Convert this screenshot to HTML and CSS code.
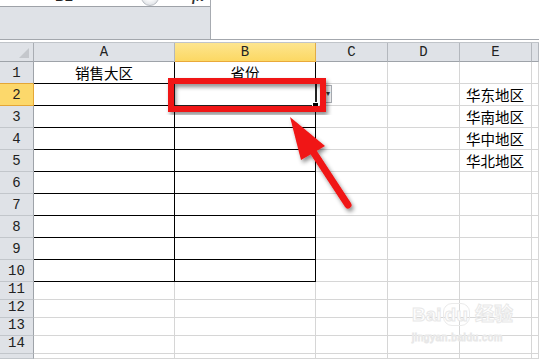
FILE: index.html
```html
<!DOCTYPE html>
<html lang="zh">
<head>
<meta charset="utf-8">
<link rel="stylesheet" href="styles.css">
</head>
<body>
<div class="page">
  <div class="top">
    <div class="panel">
      <div class="strip">
        <div class="namebox">B2</div>
        <div class="nbarrow">▾</div>
        <div class="knob"></div>
        <div class="fx">fx</div>
      </div>
      <div class="panelfill"></div>
    </div>
    <div class="formula"></div>
  </div>
  <div class="sep"></div>
  <div class="sheet">
    <div class="corner"><div class="tri"></div></div>
    <div class="ch">A</div>
    <div class="ch sel">B</div>
    <div class="ch">C</div>
    <div class="ch">D</div>
    <div class="ch">E</div>
    <div class="ch last"></div>

    <div class="rh above">1</div>
    <div class="c t mid">销售大区</div>
    <div class="c t mid">省份</div>
    <div class="c"></div><div class="c"></div><div class="c"></div><div class="c"></div>

    <div class="rh sel">2</div>
    <div class="c t"></div><div class="c t"></div>
    <div class="c"></div><div class="c"></div><div class="c txt">华东地区</div><div class="c"></div>

    <div class="rh">3</div>
    <div class="c t"></div><div class="c t"></div>
    <div class="c"></div><div class="c"></div><div class="c txt">华南地区</div><div class="c"></div>

    <div class="rh">4</div>
    <div class="c t"></div><div class="c t"></div>
    <div class="c"></div><div class="c"></div><div class="c txt">华中地区</div><div class="c"></div>

    <div class="rh">5</div>
    <div class="c t"></div><div class="c t"></div>
    <div class="c"></div><div class="c"></div><div class="c txt">华北地区</div><div class="c"></div>

    <div class="rh">6</div>
    <div class="c t"></div><div class="c t"></div>
    <div class="c"></div><div class="c"></div><div class="c"></div><div class="c"></div>

    <div class="rh">7</div>
    <div class="c t"></div><div class="c t"></div>
    <div class="c"></div><div class="c"></div><div class="c"></div><div class="c"></div>

    <div class="rh">8</div>
    <div class="c t"></div><div class="c t"></div>
    <div class="c"></div><div class="c"></div><div class="c"></div><div class="c"></div>

    <div class="rh">9</div>
    <div class="c t"></div><div class="c t"></div>
    <div class="c"></div><div class="c"></div><div class="c"></div><div class="c"></div>

    <div class="rh">10</div>
    <div class="c t"></div><div class="c t"></div>
    <div class="c"></div><div class="c"></div><div class="c"></div><div class="c"></div>

    <div class="rh">11</div>
    <div class="c"></div><div class="c"></div><div class="c"></div><div class="c"></div><div class="c"></div><div class="c"></div>
    <div class="rh">12</div>
    <div class="c"></div><div class="c"></div><div class="c"></div><div class="c"></div><div class="c"></div><div class="c"></div>
    <div class="rh">13</div>
    <div class="c"></div><div class="c"></div><div class="c"></div><div class="c"></div><div class="c"></div><div class="c"></div>
    <div class="rh">14</div>
    <div class="c"></div><div class="c"></div><div class="c"></div><div class="c"></div><div class="c"></div><div class="c"></div>
    <div class="rh"></div>
    <div class="c"></div><div class="c"></div><div class="c"></div><div class="c"></div><div class="c"></div><div class="c"></div>
  </div>

  <div class="selbox"><div class="handle"></div></div>
  <div class="ddbtn">▾</div>

  <div class="watermark">
    <div class="wm1">Bai<span class="du">du</span> 经验</div>
    <div class="wm2">jingyan.baidu.com</div>
  </div>

  <svg class="overlay" width="539" height="359" viewBox="0 0 539 359">
    <defs>
      <filter id="sh" x="-20%" y="-20%" width="140%" height="140%">
        <feDropShadow dx="2" dy="3" stdDeviation="2" flood-color="#000" flood-opacity="0.45"/>
      </filter>
    </defs>
    <rect x="171" y="81" width="152" height="28" fill="none" stroke="#f01414" stroke-width="6" filter="url(#sh)"/>
    <g filter="url(#sh)" fill="#f01414">
      <polygon points="290,117 325,146 301,160"/>
      <line x1="312" y1="150" x2="348" y2="205" stroke="#f01414" stroke-width="7" stroke-linecap="round"/>
    </g>
  </svg>
</div>
</body>
</html>
```

FILE: styles.css
```css
html, body {
  margin: 0;
  padding: 0;
  background: #fff;
}
.page {
  position: relative;
  width: 539px;
  height: 359px;
  overflow: hidden;
  font-family: "Liberation Mono", monospace;
  color: #222;
}
.top {
  display: flex;
  height: 39px;
}
.panel {
  width: 210px;
  display: flex;
  flex-direction: column;
  border-right: 1px solid #a7abb1;
  background: #dfe2e7;
}
.strip {
  height: 6px;
  display: flex;
  align-items: flex-end;
  overflow: hidden;
  background: #fff;
  border-bottom: 1px solid #9ea2a8;
}
.namebox {
  width: 128px;
  flex: none;
  text-align: center;
  font: 15px/20px "Liberation Sans", sans-serif;
  color: #222;
}
.nbarrow {
  width: 10px;
  flex: none;
  font: 11px/12px "DejaVu Sans", sans-serif;
  color: #333;
  margin-bottom: 3px;
}
.knob {
  width: 18px;
  height: 18px;
  flex: none;
  margin-left: 3px;
  border-radius: 50%;
  border: 1px solid #b9bdc3;
  background: radial-gradient(circle at 50% 40%, #fff 30%, #dfe2e6 80%);
  box-sizing: border-box;
}
.fx {
  margin-left: 33px;
  font: italic bold 14px/18px "Liberation Serif", serif;
  color: #333;
}
.panelfill {
  flex: 1;
}
.formula {
  flex: 1;
  background: #fff;
}
.sep {
  height: 2px;
  border-top: 1px solid #a3a7ad;
  border-bottom: 1px solid #c0c4c9;
  background: #fff;
}
.sheet {
  display: grid;
  grid-template-columns: 34px 141px 141px 72px 72px 72px 1fr;
  grid-template-rows: 19px repeat(10, 22px) repeat(4, 18px) 1fr;
  height: 316px;
}
.sheet > div {
  box-sizing: border-box;
}
.corner {
  background: #dfe2e7;
  border-right: 1px solid #a9adb3;
  border-bottom: 1px solid #9ea3a9;
  display: flex;
  justify-content: flex-end;
  align-items: flex-end;
  padding: 0 4px 3px 0;
}
.tri {
  width: 10px;
  height: 10px;
  background: #c4c7cc;
  clip-path: polygon(100% 0, 100% 100%, 0 100%);
}
.ch {
  background: #dfe2e7;
  border-right: 1px solid #b3b7bd;
  border-bottom: 1px solid #9ea3a9;
  display: flex;
  align-items: center;
  justify-content: center;
  font-size: 14px;
  line-height: 18px;
}
.ch.sel {
  background: linear-gradient(#fde58f, #fcd863);
  border-right-color: #e2ac45;
  border-bottom-color: #e9a93a;
}
.rh {
  background: #dfe2e7;
  border-right: 1px solid #9ea3a9;
  border-bottom: 1px solid #c2c6cb;
  display: flex;
  align-items: flex-end;
  justify-content: center;
  font-size: 14px;
  line-height: 16px;
  padding-bottom: 2px;
}
.rh.above {
  border-bottom-color: #e4a636;
}
.rh.sel {
  background: #fcd86b;
  border-right-color: #e4a636;
  border-bottom-color: #e4a636;
}
.c {
  border-right: 1px solid #d6d6d6;
  border-bottom: 1px solid #d6d6d6;
  font-family: "Noto Sans CJK SC", sans-serif;
  font-size: 14.5px;
  color: #000;
}
.c.t {
  border-right-color: #000;
  border-bottom-color: #000;
}
.c.mid {
  display: flex;
  align-items: center;
  justify-content: center;
  line-height: 18px;
}
.c.txt {
  display: flex;
  align-items: flex-end;
  padding: 0 0 1px 6px;
  line-height: 18px;
  white-space: nowrap;
}
.selbox {
  position: absolute;
  left: 173px;
  top: 82px;
  width: 144px;
  height: 25px;
  box-sizing: border-box;
  border: 2px solid #222;
  display: flex;
  justify-content: flex-end;
  align-items: flex-end;
}
.handle {
  width: 5px;
  height: 5px;
  background: #000;
  border: 1px solid #fff;
  margin: 0 -4px -4px 0;
}
.ddbtn {
  position: absolute;
  left: 320px;
  top: 85px;
  width: 12px;
  height: 18px;
  box-sizing: border-box;
  border: 1px solid #a9adb3;
  background: #f3f4f6;
  font: 8px/16px "DejaVu Sans", sans-serif;
  text-align: right;
  padding-right: 1px;
  color: #333;
}
.watermark {
  position: absolute;
  left: 412px;
  top: 302px;
  color: #fff;
  -webkit-text-stroke: 1px #e8e8e8;
  font-family: "Liberation Sans", "Noto Sans CJK SC", sans-serif;
}
.wm1 {
  font-size: 19px;
  font-weight: bold;
  line-height: 26px;
  white-space: nowrap;
}
.du {
  border: 1px solid #ebebeb;
  border-radius: 9px;
  padding: 0 1px;
  margin-left: 1px;
}
.wm2 {
  font-size: 10px;
  line-height: 13px;
  margin-top: 3px;
  letter-spacing: 0.6px;
}
.overlay {
  position: absolute;
  left: 0;
  top: 0;
  pointer-events: none;
}
```
